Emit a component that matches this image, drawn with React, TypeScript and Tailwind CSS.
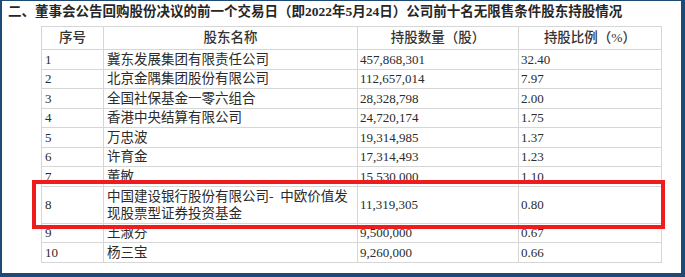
import React from 'react';

const rows: [string, React.ReactNode, string, string][] = [
  ['1', '冀东发展集团有限责任公司', '457,868,301', '32.40'],
  ['2', '北京金隅集团股份有限公司', '112,657,014', '7.97'],
  ['3', '全国社保基金一零六组合', '28,328,798', '2.00'],
  ['4', '香港中央结算有限公司', '24,720,174', '1.75'],
  ['5', '万忠波', '19,314,985', '1.37'],
  ['6', '许育金', '17,314,493', '1.23'],
  ['7', '董敏', '15,530,000', '1.10'],
  [
    '8',
    <>
      中国建设银行股份有限公司-&nbsp;&nbsp;中欧价值发
      <br />
      现股票型证券投资基金
    </>,
    '11,319,305',
    '0.80',
  ],
  ['9', '王淑芬', '9,500,000', '0.67'],
  ['10', '杨三宝', '9,260,000', '0.66'],
];

const font = 'font-["Liberation_Serif","Noto_Sans_CJK_SC",serif]';

const App: React.FC = () => {
  return (
    <div className="w-[685px] h-[277px] bg-[#1d4b76] pt-[1px] pl-[2px] pr-[4px] pb-[4px]">
      <div className={`relative h-full bg-white text-[#2b2b2b] ${font}`}>
        <div className="pl-[6px] pt-[1px] text-[13.5px] leading-[20px] font-bold text-[#262626] whitespace-nowrap">
          二、董事会公告回购股份决议的前一个交易日（即2022年5月24日）公司前十名无限售条件股东持股情况
        </div>
        <table className="ml-[39px] mt-[4px] w-[620px] border-collapse table-fixed">
          <colgroup>
            <col className="w-[62px]" />
            <col className="w-[254px]" />
            <col className="w-[161px]" />
            <col className="w-[143px]" />
          </colgroup>
          <thead>
            <tr className="h-[23px] text-[13.5px] font-medium text-[#333]">
              <th className="border border-[#d6d6d6] font-medium text-center">序号</th>
              <th className="border border-[#d6d6d6] font-medium text-center">股东名称</th>
              <th className="border border-[#d6d6d6] font-medium text-center">持股数量（股）</th>
              <th className="border border-[#d6d6d6] font-medium text-center">持股比例（%）</th>
            </tr>
          </thead>
          <tbody>
            {rows.map(([no, name, shares, ratio]) => (
              <tr key={no} className={no === '8' ? 'h-[37px]' : 'h-[19.5px]'}>
                <td className="border border-[#d6d6d6] pl-[3px] text-[13px] leading-[17px] p-0">{no}</td>
                <td className="border border-[#d6d6d6] pl-[3px] text-[13.5px] leading-[17px] p-0 whitespace-nowrap">{name}</td>
                <td className="border border-[#d6d6d6] pl-[2px] text-[13px] leading-[17px] p-0">{shares}</td>
                <td className="border border-[#d6d6d6] pl-[2px] text-[13px] leading-[17px] p-0">{ratio}</td>
              </tr>
            ))}
          </tbody>
        </table>
        <div className="absolute left-[30px] top-[179px] w-[633px] h-[49px] border-4 border-[#ee1c1c]" />
      </div>
    </div>
  );
};

export default App;
